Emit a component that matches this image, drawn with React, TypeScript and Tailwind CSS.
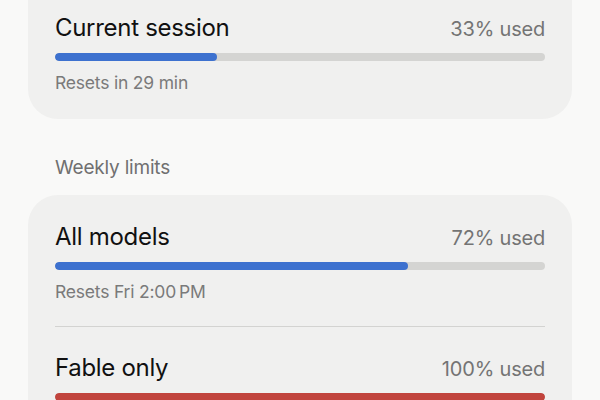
import * as React from "react";

interface Limit {
  name: string;
  percent: number;
  resets?: string;
  color: string;
}

const session: Limit = {
  name: "Current session",
  percent: 33,
  resets: "Resets in 29 min",
  color: "bg-[#3d71cf]",
};

const weekly: Limit[] = [
  {
    name: "All models",
    percent: 72,
    resets: "Resets Fri 2:00\u2009PM",
    color: "bg-[#3d71cf]",
  },
  { name: "Fable only", percent: 100, color: "bg-[#c1443d]" },
];

function LimitRow({ limit }: { limit: Limit }) {
  return (
    <div className="flex flex-col">
      <div className="flex items-baseline justify-between">
        <span className="text-[24px] leading-[29px] text-[#111111] tracking-[-0.3px]">
          {limit.name}
        </span>
        <span className="text-[20px] leading-[29px] text-[#747474] tracking-[-0.2px]">
          {limit.percent}% used
        </span>
      </div>
      <div className="mt-[9px] h-[8px] w-full rounded-full bg-[#d4d4d2] overflow-hidden">
        <div
          className={`h-full rounded-full ${limit.color}`}
          style={{ width: `${limit.percent}%` }}
        />
      </div>
      {limit.resets && (
        <div className="mt-[12px] text-[17.5px] leading-[20px] text-[#7a7a7a] tracking-[-0.2px]">
          {limit.resets}
        </div>
      )}
    </div>
  );
}

export default function App() {
  return (
    <div
      className="w-[600px] h-[400px] overflow-hidden bg-[#f9f9f8] px-[28px]"
      style={{ fontFamily: "Inter, 'Noto Sans', sans-serif" }}
    >
      {/* Current session card, top cut off */}
      <div className="-mt-[40px] rounded-[30px] bg-[#f0f0ef] px-[27px] pt-[53px] pb-[26px]">
        <LimitRow limit={session} />
      </div>

      <div className="mt-[37px] px-[27px] text-[19px] leading-[24px] text-[#707070] tracking-[-0.2px]">
        Weekly limits
      </div>

      <div className="mt-[15px] rounded-[30px] bg-[#f0f0ef] px-[27px] pt-[27px] pb-[28px]">
        <LimitRow limit={weekly[0]} />
        <div className="mt-[24px] h-px bg-[#d3d3d1]" />
        <div className="pt-[26px]">
          <LimitRow limit={weekly[1]} />
        </div>
      </div>
    </div>
  );
}
